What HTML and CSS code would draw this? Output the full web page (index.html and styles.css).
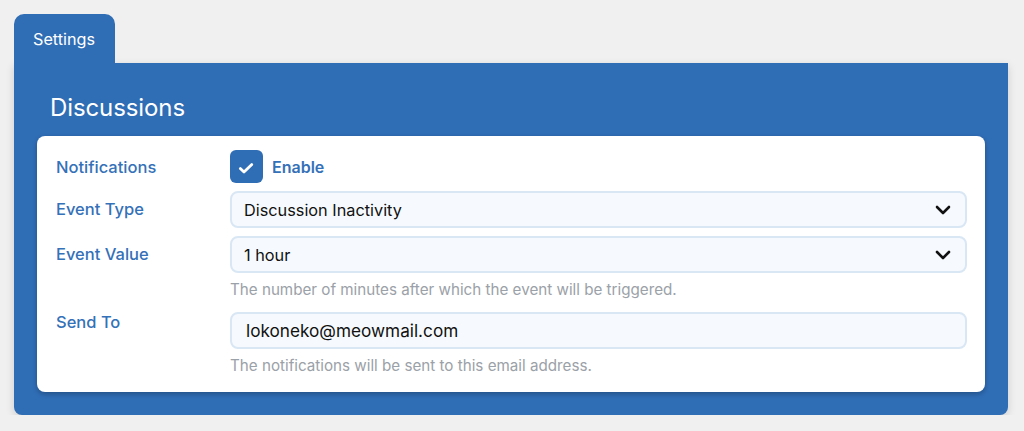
FILE: index.html
```html
<!DOCTYPE html>
<html lang="en">
<head>
  <meta charset="UTF-8">
  <meta name="viewport" content="width=device-width, initial-scale=1">
  <title>Settings - Discussions</title>
  <link rel="stylesheet" href="styles.css">
</head>
<body>
  <div class="tabs">
    <div class="tab active">Settings</div>
  </div>

  <div class="panel">
    <h2 class="panel-title">Discussions</h2>

    <div class="card">
      <div class="label">Notifications</div>
      <label class="check">
        <input type="checkbox" checked>
        <span class="box">
          <svg width="33" height="33" viewBox="0 0 33 33">
            <path d="M10.3 18.6 L14 22.1 L21.8 14.6" fill="none" stroke="#fff" stroke-width="2.8" stroke-linecap="round" stroke-linejoin="round"/>
          </svg>
        </span>
        <span class="check-text">Enable</span>
      </label>

      <div class="label label-mid">Event Type</div>
      <div class="field">
        <div class="select-wrap">
          <select class="control">
            <option>Discussion Inactivity</option>
          </select>
          <svg class="chevron" width="16" height="10" viewBox="0 0 16 10">
            <path d="M2 2 L8 8 L14 2" fill="none" stroke="#111" stroke-width="2.6" stroke-linecap="round" stroke-linejoin="round"/>
          </svg>
        </div>
      </div>

      <div class="label label-mid">Event Value</div>
      <div class="field">
        <div class="select-wrap">
          <select class="control">
            <option>1 hour</option>
          </select>
          <svg class="chevron" width="16" height="10" viewBox="0 0 16 10">
            <path d="M2 2 L8 8 L14 2" fill="none" stroke="#111" stroke-width="2.6" stroke-linecap="round" stroke-linejoin="round"/>
          </svg>
        </div>
        <p class="help">The number of minutes after which the event will be triggered.</p>
      </div>

      <div class="label">Send To</div>
      <div class="field">
        <input class="control control-text" type="text" value="lokoneko@meowmail.com">
        <p class="help">The notifications will be sent to this email address.</p>
      </div>
    </div>
  </div>
</body>
</html>
```

FILE: styles.css
```css
* {
  margin: 0;
  padding: 0;
  box-sizing: border-box;
}

body {
  font-family: Inter, "Noto Sans", sans-serif;
  background: #f0f0f0;
  padding: 14px 16px 0 14px;
  color: #111;
}

.tabs {
  display: flex;
}

.tab {
  background: #2f6db5;
  color: #fff;
  font-size: 16.2px;
  height: 49px;
  line-height: 50px;
  padding: 0 20px 0 19px;
  border-radius: 10px 10px 0 0;
}

.panel {
  background: #2f6db5;
  border-radius: 0 0 8px 8px;
  padding: 29px 23px 23px 23px;
  box-shadow: 0 3px 8px rgba(0, 0, 0, 0.15);
}

.panel-title {
  color: #fff;
  font-size: 24px;
  font-weight: 400;
  line-height: 32px;
  margin: 0 0 12px 13px;
  letter-spacing: -0.1px;
}

.card {
  background: #fff;
  border-radius: 8px;
  padding: 14px 18px 12px 19px;
  display: grid;
  grid-template-columns: 174px 1fr;
  row-gap: 8px;
  box-shadow: 0 2px 5px rgba(0, 0, 0, 0.25);
}

.label {
  color: #3471b8;
  font-size: 16.5px;
  font-weight: 500;
  line-height: 20px;
}

.label:first-child {
  align-self: center;
}

.label-mid {
  padding-top: 8px;
}

.check {
  display: flex;
  align-items: center;
  gap: 9px;
  cursor: pointer;
}

.check input {
  display: none;
}

.box {
  width: 33px;
  height: 33px;
  border-radius: 6px;
  background: #2f6db5;
  display: flex;
}

.check-text {
  color: #3471b8;
  font-size: 16px;
  font-weight: 600;
}

.field {
  display: flex;
  flex-direction: column;
}

.select-wrap {
  position: relative;
}

.control {
  display: block;
  width: 100%;
  height: 37px;
  border: 2px solid #d9e6f4;
  border-radius: 8px;
  background: #f6fafe;
  font-family: Inter, "Noto Sans", sans-serif;
  font-size: 16.3px;
  color: #111;
  padding: 0 12px;
  outline: none;
  appearance: none;
  -webkit-appearance: none;
}

.control-text {
  font-size: 17.2px;
  padding: 0 13px 0 14px;
}

.chevron {
  position: absolute;
  right: 16px;
  top: 14px;
  pointer-events: none;
}

.help {
  color: #9ba1a8;
  font-size: 15.2px;
  line-height: 20px;
  margin: 7px 0 4px 0;
}
```
